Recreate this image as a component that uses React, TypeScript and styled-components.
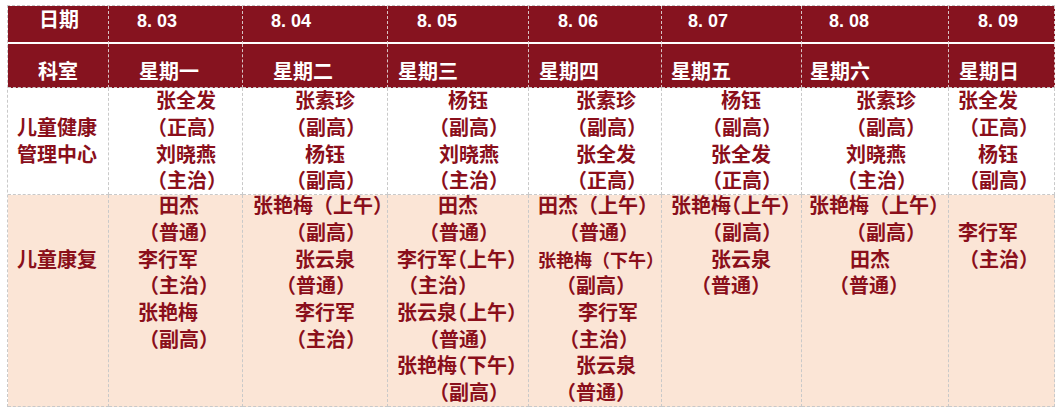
import React from "react";
import styled, { createGlobalStyle } from "styled-components";

const Global = createGlobalStyle`
  * { box-sizing: border-box; }
  html, body { background: #ffffff; }
  body { margin: 5px 0 0 7px; }
`;

const LINE = 26.67;
const GAP = (LINE - 20) / 2;
const RED = "#86131f";
const INK = "#8a0f1b";
const GRID = "#c9c9c9";

const Table = styled.div`
  display: grid;
  grid-template-columns: 101px 134px 145px 141px 133px 140px 147px 106px;
  grid-template-rows: 38px 44px 107px 212px;
  width: max-content;
  border-left: 1px dashed ${GRID};
  border-top: 1px dashed ${GRID};
  font-family: "Noto Sans CJK SC", "Noto Sans", sans-serif;
  font-weight: 700;
  font-size: 20px;
`;

const HeadCell = styled.div<{ $second?: boolean }>`
  background: ${RED};
  color: #ffffff;
  border-right: 1px dashed #d7c3c5;
  border-bottom: ${(p) => (p.$second ? `1px dashed ${GRID}` : "2px solid #ffffff")};
  padding-top: ${(p) => (p.$second ? 14 : 0)}px;
  white-space: nowrap;
`;

const BodyCell = styled.div<{ $peach?: boolean }>`
  background: ${(p) => (p.$peach ? "#fbe5d6" : "#ffffff")};
  color: ${INK};
  border-right: 1px dashed ${GRID};
  border-bottom: 1px dashed ${GRID};
  white-space: nowrap;
`;

const Stack = styled.div<{ $top: number }>`
  padding-top: ${(p) => Math.max(0, p.$top)}px;
  margin-top: ${(p) => Math.min(0, p.$top)}px;
  display: flex;
  flex-direction: column;
`;

const Line = styled.div<{ $x: number; $halt?: boolean; $small?: boolean }>`
  padding-left: ${(p) => p.$x}px;
  margin: ${GAP}px 0;
  height: 20px;
  line-height: 20px;
  font-size: ${(p) => (p.$small ? 18 : 20)}px;
  font-feature-settings: ${(p) => (p.$halt ? '"halt" 1' : "normal")};
`;

const DateText = styled.span`
  font-family: "Liberation Sans", Arial, sans-serif;
  font-weight: 700;
  font-size: 18px;
`;

type L = [number, string, ("halt" | "small")?];

type Col = {
  date: string;
  week: string;
  dx: number;
  wx: number;
  top: L[];
  bottom: L[];
  skip?: number;
};

const cols: Col[] = [
  {
    date: "8. 03",
    week: "星期一",
    dx: 28,
    wx: 30,
    top: [[47, "张全发"], [38, "（正高）"], [47, "刘晓燕"], [38, "（主治）"]],
    bottom: [[50, "田杰"], [30, "（普通）"], [29, "李行军"], [30, "（主治）"], [29, "张艳梅"], [30, "（副高）"]],
  },
  {
    date: "8. 04",
    week: "星期二",
    dx: 28,
    wx: 30,
    top: [[52, "张素珍"], [43, "（副高）"], [62, "杨钰"], [43, "（副高）"]],
    bottom: [[10, "张艳梅（上午）"], [43, "（副高）"], [52, "张云泉"], [33, "（普通）"], [52, "李行军"], [43, "（主治）"]],
  },
  {
    date: "8. 05",
    week: "星期三",
    dx: 29,
    wx: 10,
    top: [[60, "杨钰"], [41, "（副高）"], [51, "刘晓燕"], [41, "（主治）"]],
    bottom: [
      [50, "田杰"],
      [31, "（普通）"],
      [9, "李行军（上午）", "halt"],
      [10, "（主治）"],
      [9, "张云泉（上午）", "halt"],
      [31, "（普通）"],
      [9, "张艳梅（下午）", "halt"],
      [41, "（副高）"],
    ],
  },
  {
    date: "8. 06",
    week: "星期四",
    dx: 29,
    wx: 10,
    top: [[47, "张素珍"], [38, "（副高）"], [47, "张全发"], [38, "（正高）"]],
    bottom: [
      [9, "田杰（上午）"],
      [30, "（普通）"],
      [9, "张艳梅（下午）", "small"],
      [27, "（副高）"],
      [49, "李行军"],
      [30, "（主治）"],
      [47, "张云泉"],
      [27, "（普通）"],
    ],
  },
  {
    date: "8. 07",
    week: "星期五",
    dx: 26,
    wx: 9,
    top: [[59, "杨钰"], [40, "（副高）"], [49, "张全发"], [40, "（正高）"]],
    bottom: [[9, "张艳梅（上午）", "halt"], [40, "（副高）"], [49, "张云泉"], [29, "（普通）"]],
  },
  {
    date: "8. 08",
    week: "星期六",
    dx: 27,
    wx: 8,
    top: [[54, "张素珍"], [44, "（副高）"], [44, "刘晓燕"], [35, "（主治）"]],
    bottom: [[7, "张艳梅（上午）"], [44, "（副高）"], [48, "田杰"], [27, "（普通）"]],
  },
  {
    date: "8. 09",
    week: "星期日",
    dx: 29,
    wx: 10,
    top: [[9, "张全发"], [10, "（正高）"], [29, "杨钰"], [10, "（副高）"]],
    bottom: [[9, "李行军"], [10, "（主治）"]],
    skip: 1,
  },
];

const Lines: React.FC<{ lines: L[]; top: number }> = ({ lines, top }) => (
  <Stack $top={top}>
    {lines.map(([x, t, mode], i) => (
      <Line key={i} $x={x} $halt={mode === "halt"} $small={mode === "small"}>
        {t}
      </Line>
    ))}
  </Stack>
);

export default function App() {
  return (
    <>
      <Global />
      <Table>
        <HeadCell>
          <Line $x={31}>日期</Line>
        </HeadCell>
        {cols.map((c) => (
          <HeadCell key={c.date}>
            <Line $x={c.dx}>
              <DateText>{c.date}</DateText>
            </Line>
          </HeadCell>
        ))}

        <HeadCell $second>
          <Line $x={30}>科室</Line>
        </HeadCell>
        {cols.map((c) => (
          <HeadCell $second key={c.week}>
            <Line $x={c.wx}>{c.week}</Line>
          </HeadCell>
        ))}

        <BodyCell>
          <Lines lines={[[9, "儿童健康"], [9, "管理中心"]]} top={LINE - 1} />
        </BodyCell>
        {cols.map((c) => (
          <BodyCell key={"t" + c.date}>
            <Lines lines={c.top} top={-1} />
          </BodyCell>
        ))}

        <BodyCell $peach>
          <Lines lines={[[9, "儿童康复"]]} top={2 * LINE - 3} />
        </BodyCell>
        {cols.map((c) => (
          <BodyCell $peach key={"b" + c.date}>
            <Lines lines={c.bottom} top={(c.skip ?? 0) * LINE - 3} />
          </BodyCell>
        ))}
      </Table>
    </>
  );
}
